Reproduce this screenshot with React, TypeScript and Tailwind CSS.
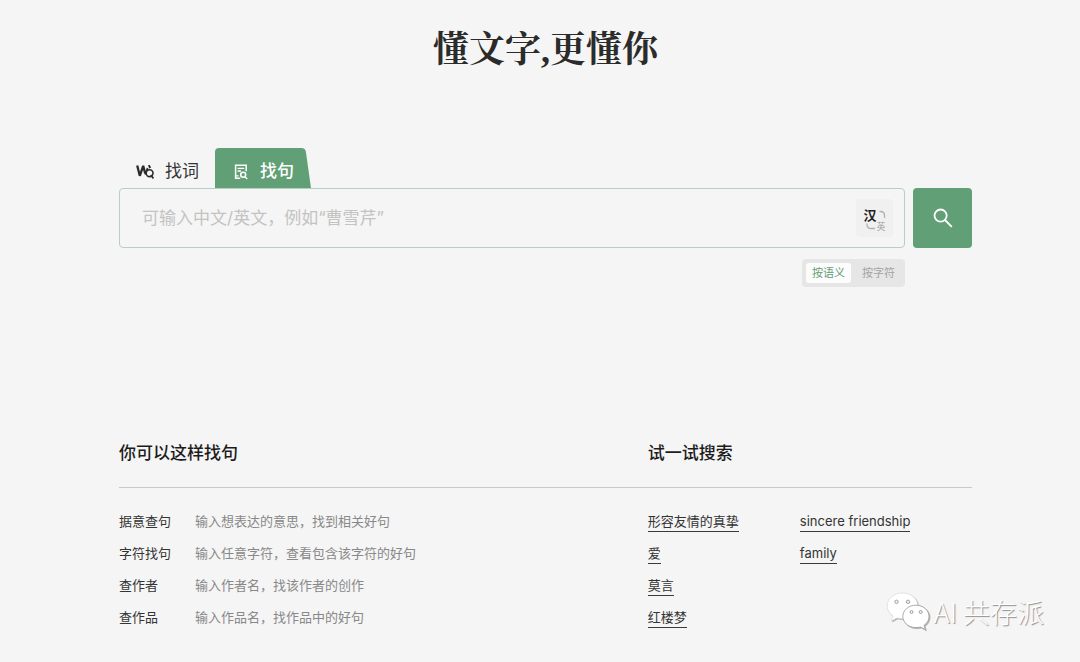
import { useState } from 'react';

const guides = [
  { term: '据意查句', text: '输入想表达的意思，找到相关好句' },
  { term: '字符找句', text: '输入任意字符，查看包含该字符的好句' },
  { term: '查作者', text: '输入作者名，找该作者的创作' },
  { term: '查作品', text: '输入作品名，找作品中的好句' },
];

const chineseSamples = ['形容友情的真挚', '爱', '莫言', '红楼梦'];
const englishSamples = ['sincere friendship', 'family'];

function WordIcon() {
  return (
    <svg width="18" height="16" viewBox="0 0 18 16" fill="none" aria-hidden="true">
      <path d="M1.200 1.500 3.800 11.800 7.200 1.800 9.200 9.500" stroke="#2b2b2b" strokeWidth="2.3" strokeLinejoin="bevel" />
      <path d="M9.200 10.500 11.600 4" stroke="#2b2b2b" strokeWidth="1.7" />
      <path d="M12.800 1.200 14.200 4" stroke="#2b2b2b" strokeWidth="1.9" />
      <circle cx="13.600" cy="9.200" r="3.400" fill="#f5f5f5" stroke="#2b2b2b" strokeWidth="1.600" />
      <path d="m14.800 11 2.600 3.400" stroke="#2b2b2b" strokeWidth="1.700" />
    </svg>
  );
}

function SentenceIcon() {
  return (
    <svg width="14" height="16" viewBox="0 0 14 16" fill="none" stroke="#fff" strokeWidth="1.500" aria-hidden="true">
      <path d="M12.200 7.200V1.200H1.600v13h4.600" />
      <path d="M3.600 4.400h6.600M3.600 7h3.400M1 11.800h3.600" strokeWidth="1.300" />
      <circle cx="9.200" cy="10.800" r="2.500" />
      <path d="m11 12.700 2.200 2.300" />
    </svg>
  );
}

function SearchIcon() {
  return (
    <svg width="20" height="20" viewBox="0 0 20 20" fill="none" stroke="#fff" strokeWidth="1.800" aria-hidden="true">
      <circle cx="7.600" cy="7.600" r="6.100" />
      <path d="m12 12 6.800 6.800" />
    </svg>
  );
}

function ChatLogo() {
  return (
    <svg width="46" height="40" viewBox="0 0 46 40" aria-hidden="true" className="mr-0.5 drop-shadow-[1px_1px_0_#b0b0b0]">
      <path
        d="M16.500 1C8 1 1.200 6.700 1.200 14c0 4.100 2.200 7.600 5.600 10L5.300 29l5.700-3.100c1.700.5 3.600.8 5.500.8 8.500 0 15.300-5.700 15.300-12.800S25 1 16.500 1Z"
        fill="#fff"
        stroke="#d4d4d4"
        strokeWidth="0.600"
      />
      <path
        d="M30 13.200c-7.300 0-13.200 5-13.200 11.200S22.700 35.600 30 35.600c1.600 0 3.100-.2 4.500-.6l4.800 2.600-1.300-4.200c3.100-2.100 5-5.300 5-9 0-6.200-5.800-11.200-13-11.200Z"
        fill="#fff"
        stroke="#a4a4a4"
        strokeWidth="0.900"
      />
      <g fill="#f0f0f0" stroke="#9a9a9a" strokeWidth="0.900">
        <circle cx="10.500" cy="9.800" r="1.700" />
        <circle cx="22" cy="9.800" r="1.700" />
        <circle cx="25.500" cy="20" r="1.500" />
        <circle cx="34.700" cy="20" r="1.500" />
      </g>
    </svg>
  );
}

function Sample({ text }: { text: string }) {
  return (
    <li className="flex">
      <a href="#search" className="border-b border-[#3a3a3a] leading-5 text-[#333]">
        {text}
      </a>
    </li>
  );
}

export default function App() {
  const [query, setQuery] = useState('');
  const [mode, setMode] = useState('meaning');

  return (
    <main className="relative min-h-screen bg-[#f5f5f5] pt-[26px] pr-[108px] pb-8 pl-[119px] font-['Inter','Noto_Sans_CJK_SC',sans-serif] text-[13px] text-[#333]">
      <h1 className="text-center font-['Liberation_Serif','Noto_Serif_CJK_SC','Noto_Sans_CJK_SC',serif] text-4xl leading-12 font-bold text-[#2b2b2b]">
        懂文字,更懂你
      </h1>

      <form id="search" className="mt-[74px]" onSubmit={(e) => e.preventDefault()}>
        <div role="tablist" className="flex h-10 text-[17px]">
          <button type="button" role="tab" aria-selected="false" className="flex w-24 items-center gap-[11px] pt-2 pl-[17px]">
            <WordIcon />
            找词
          </button>
          <button
            type="button"
            role="tab"
            aria-selected="true"
            className="relative isolate flex w-24 items-center gap-3 pt-2 pl-[19px] font-medium text-white before:absolute before:inset-y-0 before:left-0 before:-z-10 before:w-3/4 before:rounded-tl before:bg-[#61a076] after:absolute after:inset-y-0 after:right-0 after:-z-10 after:w-1/2 after:origin-bottom after:skew-x-[8deg] after:rounded-tr after:bg-[#61a076]"
          >
            <SentenceIcon />
            找句
          </button>
        </div>

        <div className="flex gap-2">
          <div className="flex h-[60px] flex-1 items-center rounded border border-[#b4d1bf] pr-[11px] pl-[22px]">
            <input
              type="text"
              aria-label="搜索内容"
              value={query}
              onChange={(e) => setQuery(e.target.value)}
              placeholder="可输入中文/英文，例如“曹雪芹”"
              className="h-full min-w-0 flex-1 bg-transparent text-[17px] outline-none placeholder:text-[#c3c3c3]"
            />
            <button
              type="button"
              aria-label="切换汉英"
              className="grid h-[38px] w-[37px] grid-cols-[13px_9px] content-center justify-center rounded bg-[#f0f0f0] pt-1"
            >
              <span className="text-[13px] leading-[13px] font-bold text-[#222]">汉</span>
              <svg width="9" height="13" viewBox="0 0 9 13" fill="none" stroke="#b0b0b0" strokeWidth="1.300" aria-hidden="true">
                <path d="M2.500 2.500h1Q7.500 2.500 7.500 6.500v2.500" />
              </svg>
              <svg width="13" height="10" viewBox="0 0 13 10" fill="none" stroke="#b0b0b0" strokeWidth="1.300" aria-hidden="true">
                <path d="M3 1.500v1Q3 6.500 7 6.500h4" />
              </svg>
              <span className="text-[9px] leading-[10px] text-[#a0a0a0]">英</span>
            </button>
          </div>
          <button type="submit" aria-label="搜索" className="flex w-[59px] items-center justify-center rounded bg-[#61a076]">
            <SearchIcon />
          </button>
        </div>

        <div className="mt-[11px] mr-[67px] flex justify-end">
          <div className="flex h-7 gap-[5px] rounded bg-[#e6e6e6] p-1 text-[11px]">
            {[
              { id: 'meaning', label: '按语义' },
              { id: 'character', label: '按字符' },
            ].map((item) => (
              <button
                key={item.id}
                type="button"
                aria-pressed={mode === item.id}
                onClick={() => setMode(item.id)}
                className={
                  mode === item.id
                    ? 'w-[45px] rounded-[3px] bg-[#fcfcfc] leading-5 text-[#61a076]'
                    : 'w-[45px] rounded-[3px] leading-5 text-[#a3a3a3]'
                }
              >
                {item.label}
              </button>
            ))}
          </div>
        </div>
      </form>

      <div className="mt-[154px] grid grid-cols-[62%_38%]">
        <h2 className="border-b border-[#c9c9c9] pb-[22px] text-[17px] leading-6 font-medium text-[#1c1c1c]">你可以这样找句</h2>
        <h2 className="border-b border-[#c9c9c9] pb-[22px] text-[17px] leading-6 font-medium text-[#1c1c1c]">试一试搜索</h2>

        <dl className="mt-[23px] flex flex-col gap-[11px]">
          {guides.map((guide) => (
            <div key={guide.term} className="flex leading-[21px]">
              <dt className="w-19">{guide.term}</dt>
              <dd className="text-[#888]">{guide.text}</dd>
            </div>
          ))}
        </dl>

        <div className="mt-[23px] flex">
          <ul className="flex w-[152px] flex-col gap-[11px]">
            {chineseSamples.map((text) => (
              <Sample key={text} text={text} />
            ))}
          </ul>
          <ul className="flex flex-col gap-[11px]">
            {englishSamples.map((text) => (
              <Sample key={text} text={text} />
            ))}
          </ul>
        </div>
      </div>

      <div className="absolute right-9 bottom-[30px] flex items-center font-['Noto_Sans_CJK_SC',sans-serif] text-[27px] leading-10 font-light text-white [text-shadow:1px_1px_1px_#8c8c8c]">
        <ChatLogo />
        <span>AI 共存派</span>
      </div>
    </main>
  );
}
